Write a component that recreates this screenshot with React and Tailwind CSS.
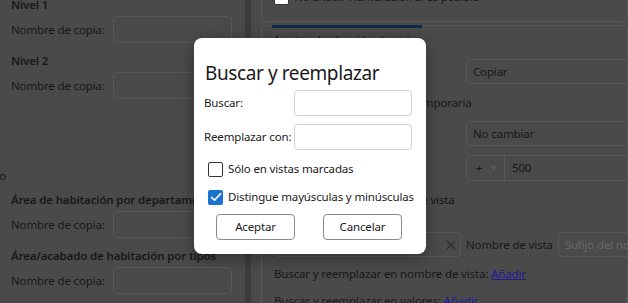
import React from "react";

const copyGroups = ["Nivel 1", "Nivel 2"];
const copyGroups2 = ["Área de habitación por departamento", "Área/acabado de habitación por tipos"];

function CopyGroup({ title }) {
  return (
    <div className="pl-[11px] pb-[10px]">
      <div className="h-[16px] leading-[16px] font-semibold whitespace-nowrap">{title}</div>
      <div className="mt-[3px] flex items-center h-[27px]">
        <span className="w-[102px] shrink-0 whitespace-nowrap">Nombre de copia:</span>
        <div className="w-[119px] h-[27px] shrink-0 rounded-[4px] border border-[#585858]"></div>
      </div>
    </div>
  );
}

function Checkbox({ checked }) {
  if (checked) {
    return (
      <div className="w-[15px] h-[15px] shrink-0 rounded-[2px] bg-[#1a73cf] flex items-center justify-center">
        <svg width="12" height="12" viewBox="0 0 12 12" fill="none">
          <path d="M1.5 6.3 L4.5 9.2 L10.6 2.6" stroke="white" strokeWidth="1.6" strokeLinecap="round" strokeLinejoin="round" />
        </svg>
      </div>
    );
  }
  return <div className="w-[15px] h-[15px] shrink-0 rounded-[2px] border border-[#333333] bg-white"></div>;
}

export default function App() {
  return (
    <div className="relative w-[628px] h-[303px] overflow-hidden bg-[#4a4a4a] text-[#181818] text-[11.5px] tracking-[-0.15px] font-['Noto_Sans',sans-serif] flex">
      {/* left panel */}
      <div className="w-[245px] shrink-0 overflow-hidden">
        <div className="-mt-[3px]">
          {copyGroups.map((g) => (
            <CopyGroup key={g} title={g} />
          ))}
          <div className="h-[83px] flex items-end pb-[7px]">
            <div className="w-[6px] overflow-hidden flex justify-end">
              <span className="whitespace-nowrap leading-[18px]">Planos por grupo</span>
            </div>
          </div>
          {copyGroups2.map((g) => (
            <CopyGroup key={g} title={g} />
          ))}
        </div>
      </div>

      {/* splitter */}
      <div className="w-[6px] shrink-0 bg-[#3c3c3c]"></div>

      {/* right panel */}
      <div className="flex-1 overflow-hidden pl-[10px]">
        <div className="-mt-[20px] flex flex-col gap-[3px]">
          <div className="h-[42px] rounded-[5px] border border-[#595959] flex items-end pb-[16px] pl-[12px]">
            <Checkbox />
            <span className="ml-[5px] whitespace-nowrap leading-[16px]">No añadir numeración si es posible</span>
          </div>
          <div className="h-[300px] rounded-t-[5px] border border-[#595959] border-b-0">
            <div className="-mt-px ml-[10px] w-[150px] h-[3px] bg-[#0b2a47]"></div>
            <div className="mt-[3px] pl-[11px] leading-[18px] whitespace-nowrap">Ajustes duplicación de vistas</div>

            <div className="mt-[10px] flex items-center h-[25px]">
              <span className="w-[204px] shrink-0 pl-[12px] whitespace-nowrap">Opción de duplicado:</span>
              <div className="w-[200px] h-[25px] shrink-0 rounded-[4px] border border-[#585858] flex items-center pl-[6px]">Copiar</div>
            </div>

            <div className="mt-[10px] pl-[12px] leading-[18px] whitespace-nowrap">Aplicar la plantilla de vista temporaria</div>

            <div className="mt-[9px] flex items-center h-[25px]">
              <span className="w-[204px] shrink-0 pl-[12px] whitespace-nowrap">Cambiar plantilla:</span>
              <div className="w-[200px] h-[25px] shrink-0 rounded-[4px] border border-[#585858] flex items-center pl-[6px]">No cambiar</div>
            </div>

            <div className="mt-[9px] flex items-center h-[26px]">
              <span className="w-[204px] shrink-0 pl-[12px] whitespace-nowrap">Desfase:</span>
              <div className="w-[200px] h-[26px] shrink-0 rounded-[4px] border border-[#585858] flex items-center">
                <div className="w-[38px] h-full flex items-center pl-[9px] gap-[8px] border-r border-[#585858]">
                  <span>+</span>
                  <svg width="7" height="4" viewBox="0 0 7 4"><path d="M0 0 L7 0 L3.5 4 Z" fill="#5c5c5c" /></svg>
                </div>
                <span className="pl-[7px]">500</span>
              </div>
            </div>

            <div className="mt-[10px] pl-[12px] leading-[18px] whitespace-nowrap">Prefijo y sufijo del nombre de vista</div>

            <div className="mt-[23px] flex items-center h-[25px] pl-[11px]">
              <div className="w-[188px] h-[25px] shrink-0 rounded-[4px] border border-[#585858] flex items-center justify-end pr-[4px]">
                <svg width="10" height="10" viewBox="0 0 10 10"><path d="M1 1 L9 9 M9 1 L1 9" stroke="#2a2a2a" strokeWidth="1.1" /></svg>
              </div>
              <span className="ml-[5px] whitespace-nowrap">Nombre de vista</span>
              <div className="ml-[5px] w-[120px] h-[25px] shrink-0 rounded-[4px] border border-[#585858] flex items-center pl-[6px] text-[#686868] whitespace-nowrap">Sufijo del nombre</div>
            </div>

            <div className="mt-[8px] pl-[12px] leading-[18px] whitespace-nowrap">
              Buscar y reemplazar en nombre de vista: <span className="text-[#1c1c96] underline">Añadir</span>
            </div>
            <div className="mt-[9px] pl-[12px] leading-[18px] whitespace-nowrap">
              Buscar y reemplazar en valores: <span className="text-[#1c1c96] underline">Añadir</span>
            </div>
          </div>
        </div>
      </div>

      {/* dialog */}
      <div className="absolute left-[194px] top-[38px] w-[232px] h-[216px] bg-white rounded-[8px] shadow-[0_4px_16px_rgba(0,0,0,0.35)] text-[#1a1a1a]">
        <div className="pt-[21px] pl-[11px] text-[19px] tracking-[-0.4px] leading-[28px] whitespace-nowrap">Buscar y reemplazar</div>
        <div className="mt-[3px] flex items-center justify-between pl-[10px] pr-[14px]">
          <span>Buscar:</span>
          <div className="w-[118px] h-[26px] rounded-[4px] border border-[#d2d2d2]"></div>
        </div>
        <div className="mt-[8px] flex items-center justify-between pl-[10px] pr-[14px]">
          <span className="whitespace-nowrap">Reemplazar con:</span>
          <div className="w-[118px] h-[26px] rounded-[4px] border border-[#d2d2d2]"></div>
        </div>
        <div className="mt-[11px] flex items-center h-[16px] pl-[14px]">
          <Checkbox />
          <span className="ml-[5px] whitespace-nowrap">Sólo en vistas marcadas</span>
        </div>
        <div className="mt-[12px] flex items-center h-[16px] pl-[14px]">
          <Checkbox checked />
          <span className="ml-[5px] whitespace-nowrap">Distingue mayúsculas y minúsculas</span>
        </div>
        <div className="mt-[9px] flex gap-[28px] pl-[22px]">
          <button className="w-[79px] h-[26px] rounded-[4px] border border-[#8a8a8a] bg-white">Aceptar</button>
          <button className="w-[79px] h-[26px] rounded-[4px] border border-[#8a8a8a] bg-white">Cancelar</button>
        </div>
      </div>
    </div>
  );
}
